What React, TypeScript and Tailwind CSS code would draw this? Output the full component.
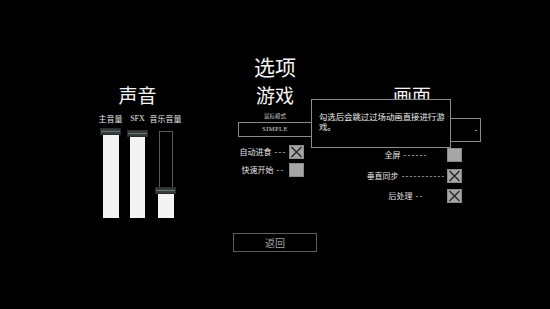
import React from "react";

const font = { fontFamily: '"Noto Sans CJK SC", "Noto Sans", sans-serif' };

function Handle() {
  return (
    <div className="w-[21px] h-[7px] bg-[#343c3c] border border-[#262c2c] flex flex-col justify-center shrink-0">
      <div className="h-[1px] bg-[#6a7474]" />
    </div>
  );
}

function Check({ x }: { x: boolean }) {
  return (
    <div className="w-[15px] h-[14px] bg-[#a6a6a6] border border-[#8a8a8a] shrink-0 flex items-center justify-center">
      {x && (
        <svg width="13" height="12" viewBox="0 0 13 12">
          <path d="M1.5 1 L11.5 11 M11.5 1 L1.5 11" stroke="#2a2a2a" strokeWidth="1.5" />
        </svg>
      )}
    </div>
  );
}

function Row({ label, dashes, x, mt, w }: { label: string; dashes: string; x: boolean; mt: string; w: string }) {
  return (
    <div className={`flex items-center gap-[1px] h-[14px] ${mt}`}>
      <div className={`${w} flex justify-center`}>
        <span className="text-[8px] leading-none text-[#e6e6e6] whitespace-nowrap">
          {label}
          <span className="ml-[3px] tracking-[1.2px]">{dashes}</span>
        </span>
      </div>
      <Check x={x} />
    </div>
  );
}

export default function App() {
  return (
    <div className="w-[550px] h-[309px] bg-black relative overflow-hidden text-white" style={font}>
      <div className="pt-[56px] text-center text-[21px] leading-none text-[#f4f4f4]">选项</div>
      <div className="flex items-start mt-[8px]">
        {/* Sound column */}
        <div className="w-[100px] ml-[88px] flex flex-col">
          <div className="text-center text-[19px] leading-[20px] ml-[-1px] text-[#f4f4f4]">声音</div>
          <div className="flex pl-[12px] mt-[10px]">
            <div className="w-[21px] flex flex-col items-center">
              <div className="text-[8px] leading-none h-[8px] whitespace-nowrap text-[#e6e6e6]">主音量</div>
              <div className="h-[90px] mt-[5px] flex flex-col items-center">
                <Handle />
                <div className="w-[16px] flex-1 bg-[#f3f3f3]" />
              </div>
            </div>
            <div className="w-[21px] ml-[6px] flex flex-col items-center">
              <div className="text-[8px] leading-none h-[8px] whitespace-nowrap text-[#e6e6e6]" style={{ fontFamily: '"Liberation Serif", serif' }}>SFX</div>
              <div className="h-[90px] mt-[5px] flex flex-col items-center">
                <div className="h-[2px]" />
                <Handle />
                <div className="w-[15px] flex-1 bg-[#f3f3f3]" />
              </div>
            </div>
            <div className="w-[21px] ml-[7px] flex flex-col items-center">
              <div className="text-[8px] leading-none h-[8px] whitespace-nowrap text-[#e6e6e6]">音乐音量</div>
              <div className="h-[90px] mt-[5px] flex flex-col items-center">
                <div className="h-[3px]" />
                <div className="w-[14px] h-[56px] border-x border-t border-[#5a5a5a]" />
                <Handle />
                <div className="w-[16px] flex-1 bg-[#f3f3f3]" />
              </div>
            </div>
          </div>
        </div>

        {/* Game column */}
        <div className="w-[100px] ml-[37px] flex flex-col items-center">
          <div className="text-center text-[19px] leading-[20px] text-[#f4f4f4]">游戏</div>
          <div className="mt-[9px] text-[5.5px] leading-none h-[6px] text-[#cfcfcf] whitespace-nowrap">鼠标模式</div>
          <div className="mt-[2px] w-[74px] flex flex-col">
            <div className="h-[15px] border border-[#8a8a8a] flex items-center justify-center">
              <span className="text-[6.5px] leading-none text-[#dcdcdc] tracking-[0.4px]" style={{ fontFamily: '"Liberation Serif", serif' }}>SIMPLE</span>
            </div>
            <div>
              <Row label="自动进食" dashes="---" x={true} mt="mt-[8px]" w="w-[50px]" />
              <Row label="快速开始" dashes="--" x={false} mt="mt-[4px]" w="w-[50px]" />
            </div>
          </div>
        </div>

        {/* Graphics column */}
        <div className="w-[138px] ml-[18px] flex flex-col">
          <div className="text-center text-[19px] leading-[20px] text-[#f4f4f4]">画面</div>
          <div className="mt-[13px] h-[24px] border border-[#8a8a8a] flex items-center justify-end pr-[3px]">
            <div className="w-[2px] h-[1px] bg-[#9a9a9a]" />
          </div>
          <div className="pl-[23px] mt-[6px]">
            <Row label="全屏" dashes="------" x={false} mt="" w="w-[80px]" />
            <Row label="垂直同步" dashes="-----------" x={true} mt="mt-[7px]" w="w-[80px]" />
            <Row label="后处理" dashes="--" x={true} mt="mt-[6px]" w="w-[80px]" />
          </div>
        </div>
      </div>

      <div className="mt-[15px] mx-auto w-[84px] h-[19px] border border-[#5c5c5c] flex items-center justify-center text-[10px] leading-none text-[#a0a0a0]">
        返回
      </div>

      {/* Tooltip */}
      <div className="absolute left-[311px] top-[99px] w-[140px] h-[49px] border-[1.5px] border-[#8c8c8c] bg-black pl-[7px] pr-[3px] pt-[11px] text-[8.4px] leading-[10px] text-[#efefef]">
        勾选后会跳过过场动画直接进行游戏。
      </div>
    </div>
  );
}
